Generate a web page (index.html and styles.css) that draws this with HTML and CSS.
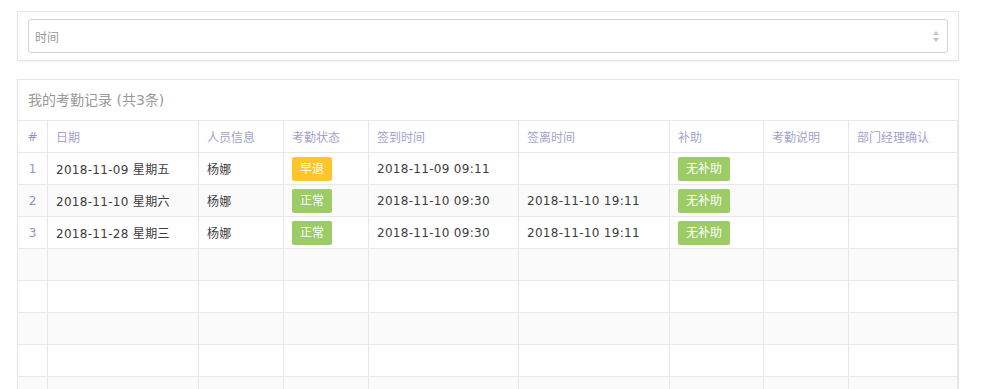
FILE: index.html
```html
<!DOCTYPE html>
<html lang="zh-CN">
<head>
<meta charset="utf-8">
<title>我的考勤记录</title>
<link rel="stylesheet" href="styles.css">
</head>
<body>
<div class="page">
  <div class="card search">
    <div class="select">
      <span class="placeholder">时间</span>
      <span class="spin"><i class="up"></i><i class="down"></i></span>
    </div>
  </div>

  <div class="card list">
    <div class="card-head">我的考勤记录 (共3条)</div>
    <table class="grid">
      <colgroup>
        <col class="c-idx"><col class="c-date"><col class="c-name"><col class="c-status">
        <col class="c-in"><col class="c-out"><col class="c-sub"><col class="c-desc"><col class="c-mgr">
      </colgroup>
      <thead>
        <tr>
          <th class="idx">#</th><th>日期</th><th>人员信息</th><th>考勤状态</th>
          <th>签到时间</th><th>签离时间</th><th>补助</th><th>考勤说明</th><th>部门经理确认</th>
        </tr>
      </thead>
      <tbody>
        <tr>
          <td class="idx">1</td><td>2018-11-09 星期五</td><td>杨娜</td><td><span class="badge warn">早退</span></td>
          <td>2018-11-09 09:11</td><td></td><td><span class="badge ok">无补助</span></td><td></td><td></td>
        </tr>
        <tr>
          <td class="idx">2</td><td>2018-11-10 星期六</td><td>杨娜</td><td><span class="badge ok">正常</span></td>
          <td>2018-11-10 09:30</td><td>2018-11-10 19:11</td><td><span class="badge ok">无补助</span></td><td></td><td></td>
        </tr>
        <tr>
          <td class="idx">3</td><td>2018-11-28 星期三</td><td>杨娜</td><td><span class="badge ok">正常</span></td>
          <td>2018-11-10 09:30</td><td>2018-11-10 19:11</td><td><span class="badge ok">无补助</span></td><td></td><td></td>
        </tr>
        <tr><td></td><td></td><td></td><td></td><td></td><td></td><td></td><td></td><td></td></tr>
        <tr><td></td><td></td><td></td><td></td><td></td><td></td><td></td><td></td><td></td></tr>
        <tr><td></td><td></td><td></td><td></td><td></td><td></td><td></td><td></td><td></td></tr>
        <tr><td></td><td></td><td></td><td></td><td></td><td></td><td></td><td></td><td></td></tr>
        <tr><td></td><td></td><td></td><td></td><td></td><td></td><td></td><td></td><td></td></tr>
        <tr><td></td><td></td><td></td><td></td><td></td><td></td><td></td><td></td><td></td></tr>
      </tbody>
    </table>
  </div>
</div>
</body>
</html>
```

FILE: styles.css
```css
html, body {
  margin: 0;
  padding: 0;
  background: #fff;
  overflow: hidden;
  height: 100%;
}

body {
  font-family: "DejaVu Sans", "Noto Sans CJK SC", sans-serif;
  font-size: 12px;
  color: #333;
}

.page {
  width: 942px;
  padding: 11px 0 0 17px;
  display: flex;
  flex-direction: column;
  gap: 18px;
}

.card {
  background: #fff;
  border: 1px solid #e6e6e6;
  box-shadow: 0 1px 1px rgba(0, 0, 0, 0.03);
}

.search {
  padding: 7px 10px;
}

.select {
  height: 34px;
  box-sizing: border-box;
  border: 1px solid #d2d2d2;
  border-radius: 3px;
  display: flex;
  align-items: center;
  justify-content: space-between;
  padding: 0 8px 0 6px;
}

.placeholder {
  color: #999;
  font-size: 12px;
}

.spin {
  display: flex;
  flex-direction: column;
  gap: 3px;
  margin-top: 1px;
}

.spin i {
  display: block;
  width: 0;
  height: 0;
  border-left: 3px solid transparent;
  border-right: 3px solid transparent;
}

.spin .up {
  border-bottom: 4px solid #c4c4c4;
}

.spin .down {
  border-top: 4px solid #c4c4c4;
}

.card-head {
  height: 40px;
  line-height: 40px;
  padding-left: 10px;
  font-size: 14px;
  color: #999;
}

.grid {
  width: 940px;
  table-layout: fixed;
  border-collapse: separate;
  border-spacing: 0;
}

.c-idx { width: 29px; }
.c-date { width: 151px; }
.c-name { width: 85px; }
.c-status { width: 85px; }
.c-in { width: 150px; }
.c-out { width: 151px; }
.c-sub { width: 94px; }
.c-desc { width: 85px; }
.c-mgr { width: 110px; }

.grid tr {
  height: 32px;
}

.grid th,
.grid td {
  box-sizing: border-box;
  height: 32px;
  padding: 0 8px;
  border-top: 1px solid #e8e8e8;
  border-left: 1px solid #e8e8e8;
  text-align: left;
  white-space: nowrap;
  font-weight: normal;
}

.grid td {
  letter-spacing: 0.3px;
  color: #3c3c3c;
}

.grid th:first-child,
.grid td:first-child {
  border-left: none;
}

.grid th:last-child,
.grid td:last-child {
  border-right: 1px solid #e8e8e8;
}

.grid th {
  color: #a3a3cb;
  background: #fff;
}

.grid .idx {
  text-align: center;
  padding: 0;
  color: #8f93c9;
  letter-spacing: 0;
}

.grid tbody tr:nth-child(even) td {
  background: #fafafa;
}

.badge {
  display: inline-block;
  height: 24px;
  line-height: 24px;
  padding: 0 8px;
  border-radius: 2px;
  color: #fff;
  font-size: 12px;
  letter-spacing: 0;
  vertical-align: middle;
}

.badge.warn {
  background: #ffc62b;
}

.badge.ok {
  background: #9ccc65;
}
```
